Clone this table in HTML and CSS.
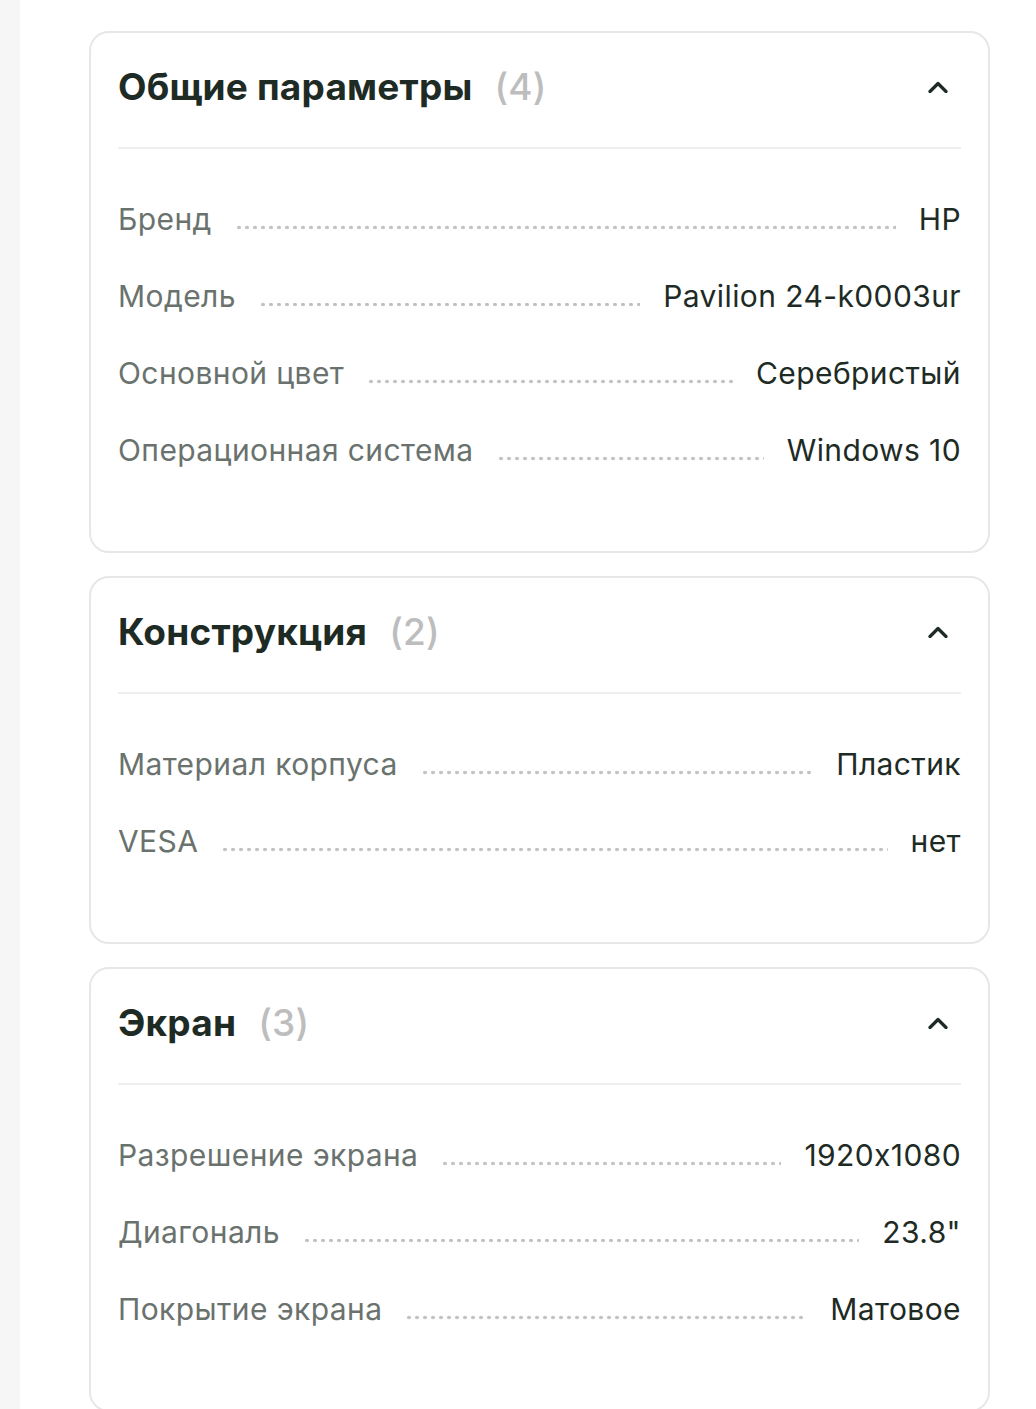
FILE: index.html
```html
<!DOCTYPE html>
<html lang="ru">
<head>
<meta charset="utf-8">
<link rel="stylesheet" href="styles.css">
</head>
<body>
<div class="page">
  <div class="strip"></div>
  <main class="content">
    <section class="card">
      <div class="card-head">
        <h2 class="title">Общие параметры<span class="count">(4)</span></h2>
        <svg class="chev" viewBox="0 0 20 12" width="20" height="12"><polyline points="2,10.5 10,2.5 18,10.5" /></svg>
      </div>
      <div class="rows">
        <div class="row"><span class="label">Бренд</span><span class="leader"></span><span class="value">HP</span></div>
        <div class="row"><span class="label">Модель</span><span class="leader"></span><span class="value">Pavilion 24-k0003ur</span></div>
        <div class="row"><span class="label">Основной цвет</span><span class="leader"></span><span class="value">Серебристый</span></div>
        <div class="row"><span class="label">Операционная система</span><span class="leader"></span><span class="value">Windows 10</span></div>
      </div>
    </section>
    <section class="card">
      <div class="card-head">
        <h2 class="title">Конструкция<span class="count">(2)</span></h2>
        <svg class="chev" viewBox="0 0 20 12" width="20" height="12"><polyline points="2,10.5 10,2.5 18,10.5" /></svg>
      </div>
      <div class="rows">
        <div class="row"><span class="label">Материал корпуса</span><span class="leader"></span><span class="value">Пластик</span></div>
        <div class="row"><span class="label">VESA</span><span class="leader"></span><span class="value">нет</span></div>
      </div>
    </section>
    <section class="card">
      <div class="card-head">
        <h2 class="title">Экран<span class="count">(3)</span></h2>
        <svg class="chev" viewBox="0 0 20 12" width="20" height="12"><polyline points="2,10.5 10,2.5 18,10.5" /></svg>
      </div>
      <div class="rows">
        <div class="row"><span class="label">Разрешение экрана</span><span class="leader"></span><span class="value">1920x1080</span></div>
        <div class="row"><span class="label">Диагональ</span><span class="leader"></span><span class="value">23.8"</span></div>
        <div class="row"><span class="label">Покрытие экрана</span><span class="leader"></span><span class="value">Матовое</span></div>
      </div>
    </section>
  </main>
</div>
</body>
</html>
```

FILE: styles.css
```css
* { box-sizing: border-box; }
html, body { margin: 0; padding: 0; background: #ffffff; }
body { font-family: Inter, "Noto Sans", "DejaVu Sans", sans-serif; color: #1e2b25; }

.page { display: flex; min-height: 1409px; }
.strip { width: 20px; flex: none; background: #f6f6f6; }
.content {
  flex: 1;
  padding: 31px 46px 0 69px;
  display: flex;
  flex-direction: column;
  gap: 23px;
}

.card {
  border: 2px solid #e7e7e7;
  border-radius: 20px;
  padding: 0 27px 62px;
  background: #fff;
}

.card-head {
  display: flex;
  align-items: center;
  justify-content: space-between;
  padding: 30px 0 36px;
  border-bottom: 2px solid #eeeeee;
}

.title {
  margin: 0;
  font-size: 37px;
  line-height: 48px;
  font-weight: 700;
  color: #1e2b25;
  letter-spacing: 0.2px;
}
.count {
  margin-left: 22px;
  font-weight: 500;
  color: #bdbdbd;
}

.chev { margin-right: 13px; display: block; }
.chev polyline {
  fill: none;
  stroke: #1e2b25;
  stroke-width: 3.2;
  stroke-linecap: round;
  stroke-linejoin: round;
}

.rows { padding-top: 32px; }
.row {
  display: flex;
  align-items: baseline;
  height: 77px;
  line-height: 77px;
  font-size: 30px;
  letter-spacing: 0.4px;
}
.label { color: #6a726e; white-space: nowrap; }
.value { color: #1e2b25; white-space: nowrap; }
.leader {
  flex: 1;
  display: inline-block;
  height: 5px;
  margin: 0 23px;
  background-image: radial-gradient(circle, #c2c2c2 1.6px, transparent 2.1px);
  background-size: 8px 5px;
  background-repeat: repeat-x;
  background-position: left center;
}
```
